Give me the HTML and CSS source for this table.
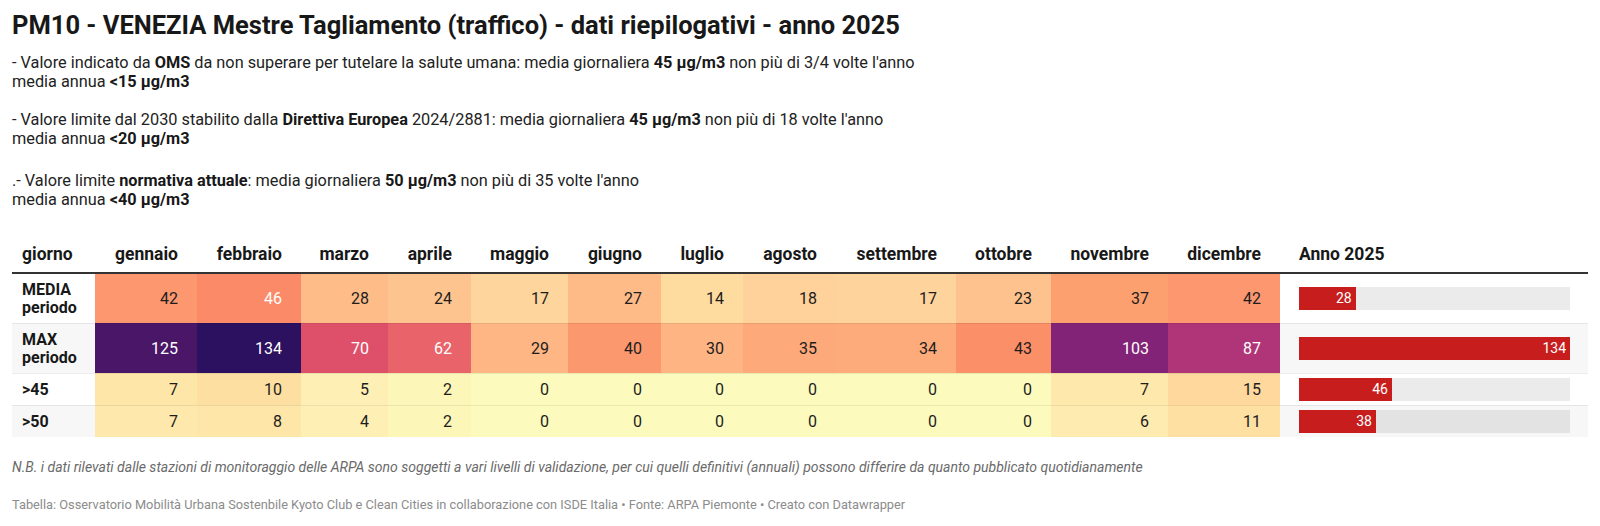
FILE: index.html
```html
<!DOCTYPE html>
<html lang="it">
<head>
<meta charset="utf-8">
<title>PM10 - VENEZIA Mestre Tagliamento</title>
<link rel="stylesheet" href="styles.css">
</head>
<body>
<div class="chart">
  <h1 class="title">PM10 - VENEZIA Mestre Tagliamento (traffico) - dati riepilogativi - anno 2025</h1>
  <div class="intro">
    <p class="para">- Valore indicato da <b>OMS</b> da non superare per tutelare la salute umana: media giornaliera <b>45 μg/m3</b> non più di 3/4 volte l'anno<br>media annua <b>&lt;15 μg/m3</b></p>
    <p class="para p2">- Valore limite dal 2030 stabilito dalla <b>Direttiva Europea</b> 2024/2881: media giornaliera <b>45 μg/m3</b> non più di 18 volte l'anno<br>media annua <b>&lt;20 μg/m3</b></p>
    <p class="para p3">.- Valore limite <b>normativa attuale</b>: media giornaliera <b>50 μg/m3</b> non più di 35 volte l'anno<br>media annua <b>&lt;40 μg/m3</b></p>
  </div>

  <table class="tbl">
    <colgroup>
      <col class="c-lab"><col class="c-gen"><col class="c-feb"><col class="c-mar"><col class="c-apr"><col class="c-mag"><col class="c-giu"><col class="c-lug"><col class="c-ago"><col class="c-set"><col class="c-ott"><col class="c-nov"><col class="c-dic"><col class="c-anno">
    </colgroup>
    <thead>
      <tr>
        <th class="lab">giorno</th>
        <th class="num">gennaio</th>
        <th class="num">febbraio</th>
        <th class="num">marzo</th>
        <th class="num">aprile</th>
        <th class="num">maggio</th>
        <th class="num">giugno</th>
        <th class="num">luglio</th>
        <th class="num">agosto</th>
        <th class="num">settembre</th>
        <th class="num">ottobre</th>
        <th class="num">novembre</th>
        <th class="num">dicembre</th>
        <th class="anno">Anno 2025</th>
      </tr>
    </thead>
    <tbody>
      <tr class="row">
        <td class="lab">MEDIA<br>periodo</td>
        <td class="num" style="background:#fc9770">42</td>
        <td class="num inv" style="background:#fb8a68">46</td>
        <td class="num" style="background:#febd88">28</td>
        <td class="num" style="background:#fec48f">24</td>
        <td class="num" style="background:#fed69d">17</td>
        <td class="num" style="background:#febb87">27</td>
        <td class="num" style="background:#fedb9f">14</td>
        <td class="num" style="background:#fed29a">18</td>
        <td class="num" style="background:#fed49c">17</td>
        <td class="num" style="background:#fec28e">23</td>
        <td class="num" style="background:#fca06f">37</td>
        <td class="num" style="background:#fc9770">42</td>
        <td class="anno"><div class="track"><div class="fill" style="width:20.9%">28</div></div></td>
      </tr>
      <tr class="row alt">
        <td class="lab">MAX<br>periodo</td>
        <td class="num inv" style="background:#4a1668">125</td>
        <td class="num inv" style="background:#2c1160">134</td>
        <td class="num inv" style="background:#de4f6a">70</td>
        <td class="num inv" style="background:#e8636a">62</td>
        <td class="num" style="background:#feb684">29</td>
        <td class="num" style="background:#fc986d">40</td>
        <td class="num" style="background:#feb583">30</td>
        <td class="num" style="background:#fda97a">35</td>
        <td class="num" style="background:#fdab7b">34</td>
        <td class="num" style="background:#fb8f68">43</td>
        <td class="num inv" style="background:#832377">103</td>
        <td class="num inv" style="background:#b03478">87</td>
        <td class="anno"><div class="track"><div class="fill" style="width:100%">134</div></div></td>
      </tr>
      <tr class="row">
        <td class="lab">&gt;45</td>
        <td class="num" style="background:#fee6a9">7</td>
        <td class="num" style="background:#fedfa2">10</td>
        <td class="num" style="background:#feefb4">5</td>
        <td class="num" style="background:#fdf6b9">2</td>
        <td class="num" style="background:#fcfbbd">0</td>
        <td class="num" style="background:#fcfbbd">0</td>
        <td class="num" style="background:#fcfbbd">0</td>
        <td class="num" style="background:#fcfbbd">0</td>
        <td class="num" style="background:#fcfbbd">0</td>
        <td class="num" style="background:#fcfbbd">0</td>
        <td class="num" style="background:#fee8ab">7</td>
        <td class="num" style="background:#fed89c">15</td>
        <td class="anno"><div class="track"><div class="fill" style="width:34.3%">46</div></div></td>
      </tr>
      <tr class="row alt">
        <td class="lab">&gt;50</td>
        <td class="num" style="background:#fee8ac">7</td>
        <td class="num" style="background:#fee6a9">8</td>
        <td class="num" style="background:#fef0b4">4</td>
        <td class="num" style="background:#fdf6b9">2</td>
        <td class="num" style="background:#fcfbbd">0</td>
        <td class="num" style="background:#fcfbbd">0</td>
        <td class="num" style="background:#fcfbbd">0</td>
        <td class="num" style="background:#fcfbbd">0</td>
        <td class="num" style="background:#fcfbbd">0</td>
        <td class="num" style="background:#fcfbbd">0</td>
        <td class="num" style="background:#feebaf">6</td>
        <td class="num" style="background:#fee0a3">11</td>
        <td class="anno"><div class="track"><div class="fill" style="width:28.4%">38</div></div></td>
      </tr>
    </tbody>
  </table>

  <p class="note">N.B. i dati rilevati dalle stazioni di monitoraggio delle ARPA sono soggetti a vari livelli di validazione, per cui quelli definitivi (annuali) possono differire da quanto pubblicato quotidianamente</p>
  <p class="source">Tabella: Osservatorio Mobilità Urbana Sostenbile Kyoto Club e Clean Cities in collaborazione con ISDE Italia • Fonte: ARPA Piemonte • Creato con Datawrapper</p>
</div>
</body>
</html>
```

FILE: styles.css
```css
html, body {
  margin: 0;
  padding: 0;
  background: #ffffff;
}

body {
  font-family: Roboto, "Liberation Sans", Arial, sans-serif;
  color: #1d1d1d;
}

.chart {
  padding: 10px 12px 0 12px;
}

.title {
  margin: 0;
  font-size: 25.5px;
  line-height: 30px;
  font-weight: 700;
  color: #181818;
}

.intro {
  margin-top: 14px;
}

.para {
  margin: 0;
  font-size: 16.3px;
  line-height: 18.5px;
  color: #222222;
}

.para b {
  font-weight: 700;
  color: #181818;
}

.p2 {
  margin-top: 20px;
}

.p3 {
  margin-top: 24px;
}

.tbl {
  margin-top: 27px;
  width: 1576px;
  table-layout: fixed;
  border-collapse: separate;
  border-spacing: 0;
}

.c-lab { width: 83px; }
.c-gen { width: 102px; }
.c-feb { width: 104px; }
.c-mar { width: 87px; }
.c-apr { width: 83px; }
.c-mag { width: 97px; }
.c-giu { width: 93px; }
.c-lug { width: 82px; }
.c-ago { width: 93px; }
.c-set { width: 120px; }
.c-ott { width: 95px; }
.c-nov { width: 117px; }
.c-dic { width: 112px; }
.c-anno { width: 308px; }

.tbl th {
  font-size: 17.5px;
  line-height: 20px;
  font-weight: 700;
  color: #181818;
  padding: 8px 0 8px 0;
  border-bottom: 2px solid #333333;
  white-space: nowrap;
  vertical-align: bottom;
}

.tbl th.lab {
  text-align: left;
  padding-left: 10px;
}

.tbl th.num {
  text-align: right;
  padding-right: 19px;
}

.tbl th.anno {
  text-align: left;
  padding-left: 19px;
}

.tbl td {
  font-size: 16px;
  line-height: 18px;
  padding: 7px 0 6px 0;
  vertical-align: middle;
  color: #1d1d1d;
}

.row + .row td {
  border-top: 1px solid rgba(0, 0, 0, 0.07);
}

.tbl td.lab {
  font-weight: 700;
  padding-left: 10px;
  text-align: left;
  color: #181818;
}

.tbl td.num {
  text-align: right;
  padding-right: 19px;
}

.tbl td.inv {
  color: #ffffff;
}

.alt td.lab,
.alt td.anno {
  background: #f7f7f7;
}

.tbl td.anno {
  padding: 4px 18px 4px 19px;
}

.track {
  height: 23px;
  background: rgba(0, 0, 0, 0.08);
}

.fill {
  height: 23px;
  background: #c71e1d;
  color: #ffffff;
  font-size: 14px;
  line-height: 23px;
  text-align: right;
  padding-right: 4px;
  box-sizing: border-box;
}

.note {
  margin: 21px 0 0 0;
  font-size: 14px;
  line-height: 18px;
  font-style: italic;
  color: #6a6a6a;
}

.source {
  margin: 21px 0 0 0;
  font-size: 12.8px;
  line-height: 15px;
  color: #8c8c8c;
}
```
